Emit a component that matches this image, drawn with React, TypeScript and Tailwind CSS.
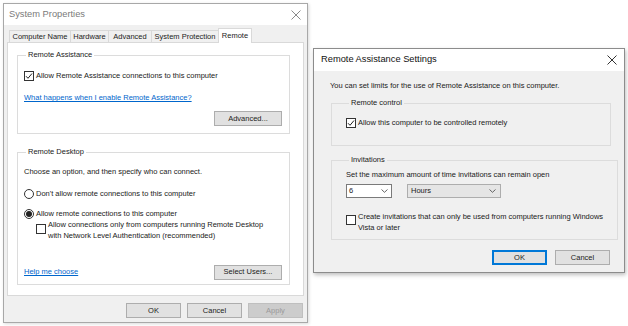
import React from "react";

const font = { fontFamily: '"Liberation Sans", Arial, sans-serif' };

function Check({ checked }: { checked?: boolean }) {
  return (
    <div className="w-[10px] h-[10px] border border-[#333] bg-white flex items-center justify-center shrink-0">
      {checked && (
        <svg width="8" height="8" viewBox="0 0 8 8">
          <path d="M1 4.2 L3 6.3 L7 1.5" fill="none" stroke="#222" strokeWidth="1" />
        </svg>
      )}
    </div>
  );
}

function Radio({ checked }: { checked?: boolean }) {
  return (
    <div className="w-[10px] h-[10px] rounded-full border border-[#333] bg-white flex items-center justify-center shrink-0">
      {checked && <div className="w-[6px] h-[6px] rounded-full bg-[#222]" />}
    </div>
  );
}

function Btn({ children, w = 68, disabled, primary }: { children: React.ReactNode; w?: number; disabled?: boolean; primary?: boolean }) {
  const base = "h-[15px] flex items-center justify-center text-[7.5px] leading-none";
  const cls = disabled
    ? "bg-[#cccccc] border border-[#bfbfbf] text-[#9a9a9a]"
    : primary
    ? "bg-[#e1e1e1] border-2 border-[#0078d7] text-[#222]"
    : "bg-[#e1e1e1] border border-[#adadad] text-[#222]";
  return (
    <div className={`${base} ${cls}`} style={{ width: w }}>
      {children}
    </div>
  );
}

function CloseX({ color }: { color: string }) {
  return (
    <svg width="10" height="10" viewBox="0 0 10 10">
      <path d="M0.5 0.5 L9.5 9.5 M9.5 0.5 L0.5 9.5" stroke={color} strokeWidth="1" />
    </svg>
  );
}

function Chevron() {
  return (
    <svg width="7" height="4" viewBox="0 0 7 4">
      <path d="M0.5 0.5 L3.5 3.3 L6.5 0.5" fill="none" stroke="#555" strokeWidth="0.9" />
    </svg>
  );
}

function Tab({ label, w, selected }: { label: string; w: number; selected?: boolean }) {
  if (selected)
    return (
      <div
        className="h-[15px] -mb-px z-10 bg-white border border-[#d9d9d9] border-b-0 flex items-center justify-center text-[7.5px] text-[#222]"
        style={{ width: w }}
      >
        {label}
      </div>
    );
  return (
    <div
      className="h-[12px] bg-[#f0f0f0] border border-[#d9d9d9] border-b-0 -mr-px flex items-center justify-center text-[7.5px] text-[#222]"
      style={{ width: w }}
    >
      {label}
    </div>
  );
}

export default function App() {
  return (
    <div className="w-[628px] h-[326px] bg-white flex items-start text-[#1a1a1a]" style={font}>
      {/* System Properties */}
      <div className="ml-[3px] mt-[3px] w-[305px] h-[320px] border border-[#a8a8a8] flex flex-col shadow-[1px_1px_3px_rgba(0,0,0,0.15)]">
        <div className="h-[21px] bg-white flex items-center justify-between pl-[5px] pr-[6px]">
          <span className="text-[9.3px] text-[#7a7a7a]">System Properties</span>
          <CloseX color="#8a8a8a" />
        </div>
        <div className="flex-1 bg-[#f0f0f0] flex flex-col px-[3px]">
          <div className="flex items-end h-[14px] mt-[3px] pl-[2px]">
            <Tab label="Computer Name" w={62} />
            <Tab label="Hardware" w={39} />
            <Tab label="Advanced" w={44} />
            <Tab label="System Protection" w={68} />
            <Tab label="Remote" w={34} selected />
          </div>
          <div className="h-[254px] bg-white border border-[#d9d9d9] pl-[9px] pr-[13px] pt-[7px] flex flex-col">
            <fieldset className="border border-[#dcdcdc] h-[84px] px-[6px]">
              <legend className="ml-[2px] px-[2px] text-[7.5px] leading-[10px]">Remote Assistance</legend>
              <div className="flex items-center gap-[2px] mt-[10px]">
                <Check checked />
                <span className="text-[7.5px]">Allow Remote Assistance connections to this computer</span>
              </div>
              <div className="mt-[12px] text-[7.5px] text-[#0066cc] underline leading-[10px]">
                What happens when I enable Remote Assistance?
              </div>
              <div className="flex justify-end mt-[8px] pr-[1px]">
                <Btn w={68}>Advanced...</Btn>
              </div>
            </fieldset>
            <fieldset className="border border-[#dcdcdc] h-[138px] mt-[13px] px-[6px]">
              <legend className="ml-[2px] px-[2px] text-[7.5px] leading-[10px]">Remote Desktop</legend>
              <div className="mt-[10px] text-[7.5px] leading-[10px]">Choose an option, and then specify who can connect.</div>
              <div className="flex items-center gap-[2px] mt-[11px]">
                <Radio />
                <span className="text-[7.5px]">Don't allow remote connections to this computer</span>
              </div>
              <div className="flex items-center gap-[2px] mt-[9px]">
                <Radio checked />
                <span className="text-[7.5px]">Allow remote connections to this computer</span>
              </div>
              <div className="flex items-start gap-[2px] -mt-px pl-[12px]">
                <div className="mt-[5px]">
                  <Check />
                </div>
                <span className="text-[7.5px] leading-[11px]">
                  Allow connections only from computers running Remote Desktop
                  <br />
                  with Network Level Authentication (recommended)
                </span>
              </div>
              <div className="flex items-center justify-between mt-[24px] pr-[1px]">
                <span className="text-[7.5px] text-[#0066cc] underline">Help me choose</span>
                <Btn w={68}>Select Users...</Btn>
              </div>
            </fieldset>
          </div>
          <div className="flex justify-end gap-[6px] mt-[7px] pr-[1px]">
            <Btn w={55}>OK</Btn>
            <Btn w={55}>Cancel</Btn>
            <Btn w={55} disabled>
              Apply
            </Btn>
          </div>
        </div>
      </div>

      {/* Remote Assistance Settings */}
      <div className="ml-[5px] mt-[48px] w-[312px] h-[225px] border border-[#8c8c8c] flex flex-col shadow-[1px_2px_4px_rgba(0,0,0,0.25)]">
        <div className="h-[22px] bg-white flex items-center justify-between pl-[7px] pr-[7px]">
          <span className="text-[9.3px] text-[#111]">Remote Assistance Settings</span>
          <CloseX color="#333" />
        </div>
        <div className="flex-1 bg-[#f0f0f0] flex flex-col pl-[17px] pr-[13px]">
          <div className="mt-[10px] -ml-px text-[7.5px] leading-[10px]">
            You can set limits for the use of Remote Assistance on this computer.
          </div>
          <fieldset className="border border-[#dcdcdc] h-[48px] mt-[7px] px-[14px]">
            <legend className="ml-[3px] px-[2px] text-[7.5px] leading-[10px]">Remote control</legend>
            <div className="flex items-center gap-[2px] mt-[9px]">
              <Check checked />
              <span className="text-[7.5px]">Allow this computer to be controlled remotely</span>
            </div>
          </fieldset>
          <fieldset className="border border-[#dcdcdc] h-[85px] mt-[9px] px-[14px]">
            <legend className="ml-[3px] px-[2px] text-[7.5px] leading-[10px]">Invitations</legend>
            <div className="mt-[5px] text-[7.5px] leading-[10px]">Set the maximum amount of time invitations can remain open</div>
            <div className="flex gap-[15px] mt-[4px]">
              <div className="w-[46px] h-[14px] bg-white border border-[#7a7a7a] flex items-center justify-between pl-[2px] pr-[3px]">
                <span className="text-[7.5px]">6</span>
                <Chevron />
              </div>
              <div className="w-[94px] h-[14px] bg-[#e5e5e5] border border-[#adadad] flex items-center justify-between pl-[3px] pr-[4px]">
                <span className="text-[7.5px]">Hours</span>
                <Chevron />
              </div>
            </div>
            <div className="flex items-start gap-[2px] mt-[13px]">
              <div className="mt-[4px]">
                <Check />
              </div>
              <span className="text-[7.5px] leading-[11px] whitespace-nowrap">
                Create invitations that can only be used from computers running Windows
                <br />
                Vista or later
              </span>
            </div>
          </fieldset>
          <div className="flex justify-end gap-[8px] mt-[10px] pr-[1px]">
            <Btn w={55} primary>
              OK
            </Btn>
            <Btn w={55}>Cancel</Btn>
          </div>
        </div>
      </div>
    </div>
  );
}
